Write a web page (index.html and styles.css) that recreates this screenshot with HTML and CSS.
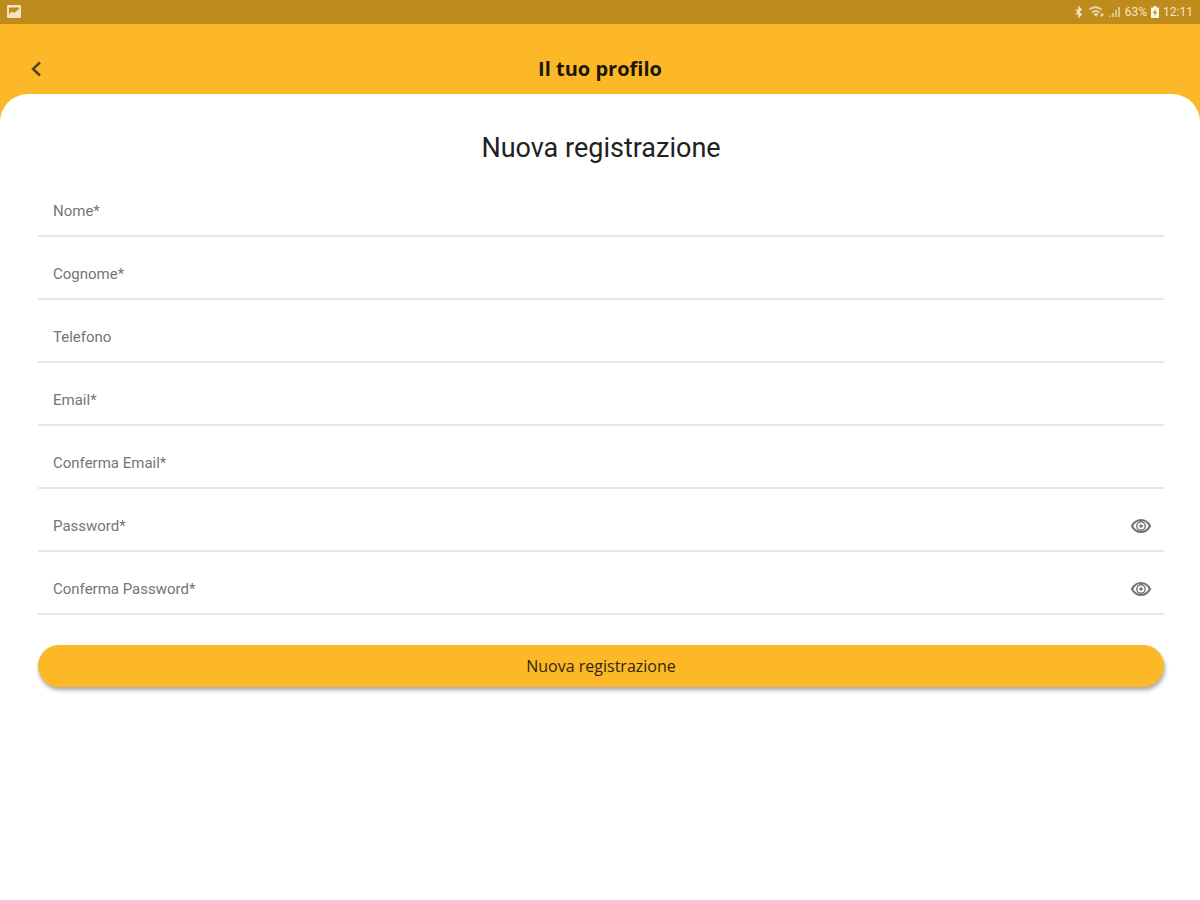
FILE: index.html
```html
<!DOCTYPE html>
<html lang="it">
<head>
    <meta charset="UTF-8">
    <meta name="viewport" content="width=device-width, initial-scale=1.0">
    <title>Il tuo profilo</title>
    <link rel="stylesheet" href="styles.css">
</head>
<body>

<div class="status-bar">
    <svg class="status-photo" width="14" height="14" viewBox="0 0 14 14">
        <path fill="#f3e3c0" fill-rule="evenodd" d="M1 0h12a1 1 0 0 1 1 1v11a1 1 0 0 1-1 1H1a1 1 0 0 1-1-1V1a1 1 0 0 1 1-1zM2 2.500V9l3-2.500 2 1.500 5-4V2.500z"/>
    </svg>
    <div class="status-icons">
        <svg class="bluetooth" width="8" height="12" viewBox="0 0 8 12" fill="none" stroke="#f3e3c0" stroke-width="1.600">
            <path d="M1 3.500l5 5L4 10.500v-9l2 2-5 5"/>
        </svg>
        <svg class="wifi" width="16" height="12" viewBox="0 0 16 12">
            <path fill="none" stroke="#ecd5a3" stroke-width="1.800" d="M0.500 3.500c4-3 8-3 12 0M3 6.500c2.500-2 5-2 7.500 0"/>
            <path fill="#ecd5a3" d="M4.500 8c2-1.200 3.500-1.200 5 0L7 11zM11 9l2-2 2 2-2 2z"/>
        </svg>
        <svg width="12" height="12" viewBox="0 0 12 12" fill="#dfc183">
            <path d="M0 11V9.500h2V11zM3 11V7h2v4zM6 11V4h2v7zM9 11V1h2v10z"/>
        </svg>
        <span>63%</span>
        <svg class="battery" width="8" height="12" viewBox="0 0 8 12">
            <path fill="#fff4dc" fill-rule="evenodd" d="M2.500 0h3v1.500H8V12H0V1.500h2.500zM4.500 3L2 7h1.500v3L6 6H4.500z"/>
        </svg>
        <span>12:11</span>
    </div>
</div>

<header class="top-bar">
    <button type="button" class="back" aria-label="Indietro">
        <svg width="12" height="16" viewBox="0 0 12 16" fill="none" stroke="#54401a" stroke-width="2.400">
            <path d="M10 1.500L3 8l7 6.500"/>
        </svg>
    </button>
    <h1>Il tuo profilo</h1>
</header>

<main class="panel">
    <h2>Nuova registrazione</h2>

    <form id="registrationForm">
        <div class="field">
            <label for="nome">Nome*</label>
            <input type="text" id="nome" name="nome" required>
        </div>
        <div class="field">
            <label for="cognome">Cognome*</label>
            <input type="text" id="cognome" name="cognome" required>
        </div>
        <div class="field">
            <label for="telefono">Telefono</label>
            <input type="tel" id="telefono" name="telefono">
        </div>
        <div class="field">
            <label for="email">Email*</label>
            <input type="email" id="email" name="email" required>
        </div>
        <div class="field">
            <label for="confermaEmail">Conferma Email*</label>
            <input type="email" id="confermaEmail" name="confermaEmail" required>
        </div>
        <div class="field">
            <label for="password">Password*</label>
            <input type="password" id="password" name="password" required>
            <button type="button" class="eye" aria-label="Mostra password" onclick="togglePassword('password')">
                <svg width="22" height="16" viewBox="0 0 22 16">
                    <path fill="none" stroke="#757575" stroke-width="2.200" d="M2 8c2-4 5-6 9-6s7 2 9 6c-2 4-5 6-9 6s-7-2-9-6z"/>
                    <circle cx="11" cy="8" r="4.200" fill="none" stroke="#757575" stroke-width="1.400"/>
                    <circle cx="11" cy="8" r="1.800" fill="#757575"/>
                </svg>
            </button>
        </div>
        <div class="field">
            <label for="confermaPassword">Conferma Password*</label>
            <input type="password" id="confermaPassword" name="confermaPassword" required>
            <button type="button" class="eye" aria-label="Mostra conferma password" onclick="togglePassword('confermaPassword')">
                <svg width="22" height="16" viewBox="0 0 22 16">
                    <path fill="none" stroke="#757575" stroke-width="2.200" d="M2 8c2-4 5-6 9-6s7 2 9 6c-2 4-5 6-9 6s-7-2-9-6z"/>
                    <circle cx="11" cy="8" r="4.200" fill="none" stroke="#757575" stroke-width="1.400"/>
                    <circle cx="11" cy="8" r="1.800" fill="#757575"/>
                </svg>
            </button>
        </div>

        <button type="submit" class="submit">Nuova registrazione</button>
    </form>
</main>

<script>
    function togglePassword(id) {
        const input = document.getElementById(id);
        input.type = input.type === "password" ? "text" : "password";
    }
</script>

</body>
</html>
```
FILE: styles.css
```css
* {
    box-sizing: border-box;
}
body {
    margin: 0;
    min-height: 100vh;
    display: flex;
    flex-direction: column;
    font-family: Roboto, sans-serif;
    background-color: #fcb827;
}
button {
    border: none;
    cursor: pointer;
}
svg {
    display: block;
}
.status-bar {
    display: flex;
    align-items: center;
    justify-content: space-between;
    height: 24px;
    padding: 0 7px;
    background-color: #be8b1d;
    color: #f6e6c4;
    font-size: 12px;
}
.status-icons {
    display: flex;
    align-items: center;
    gap: 4px;
}
.status-icons .wifi {
    margin-left: 2px;
}
.top-bar {
    display: grid;
    grid-template-columns: 48px 1fr 48px;
    align-items: center;
    height: 70px;
    padding: 20px 12px 0;
}
.back {
    display: flex;
    align-items: center;
    justify-content: center;
    height: 48px;
    padding: 0;
    background: none;
}
h1 {
    margin: 0;
    text-align: center;
    font-family: "Open Sans", sans-serif;
    font-size: 20px;
    line-height: 28px;
    font-weight: 700;
    color: #1c1508;
}
.panel {
    flex: 1;
    padding: 36px 36px 40px 38px;
    background-color: #fff;
    border-radius: 28px 28px 0 0;
}
h2 {
    margin: 0 0 8px;
    text-align: center;
    font-size: 27px;
    line-height: 36px;
    font-weight: 400;
    color: #212121;
}
.field {
    display: flex;
    align-items: flex-end;
    height: 63px;
    padding: 0 12px 0 15px;
    border-bottom: 2px solid #e8e8e8;
}
.field label {
    line-height: 48px;
    font-size: 15px;
    color: #757575;
}
.field input {
    flex: 1;
    min-width: 0;
    height: 48px;
    padding: 0 12px;
    border: none;
    outline: none;
    background: none;
    font-family: inherit;
    font-size: 15px;
}
.eye {
    display: flex;
    align-items: center;
    height: 48px;
    padding: 0;
    background: none;
}
.submit {
    display: block;
    width: 100%;
    height: 42px;
    margin-top: 30px;
    border-radius: 21px;
    background-color: #fcb827;
    box-shadow: 1px 3px 4px rgba(0, 0, 0, 0.35);
    font-family: "Open Sans", sans-serif;
    font-size: 16px;
    color: #33260d;
}
```
